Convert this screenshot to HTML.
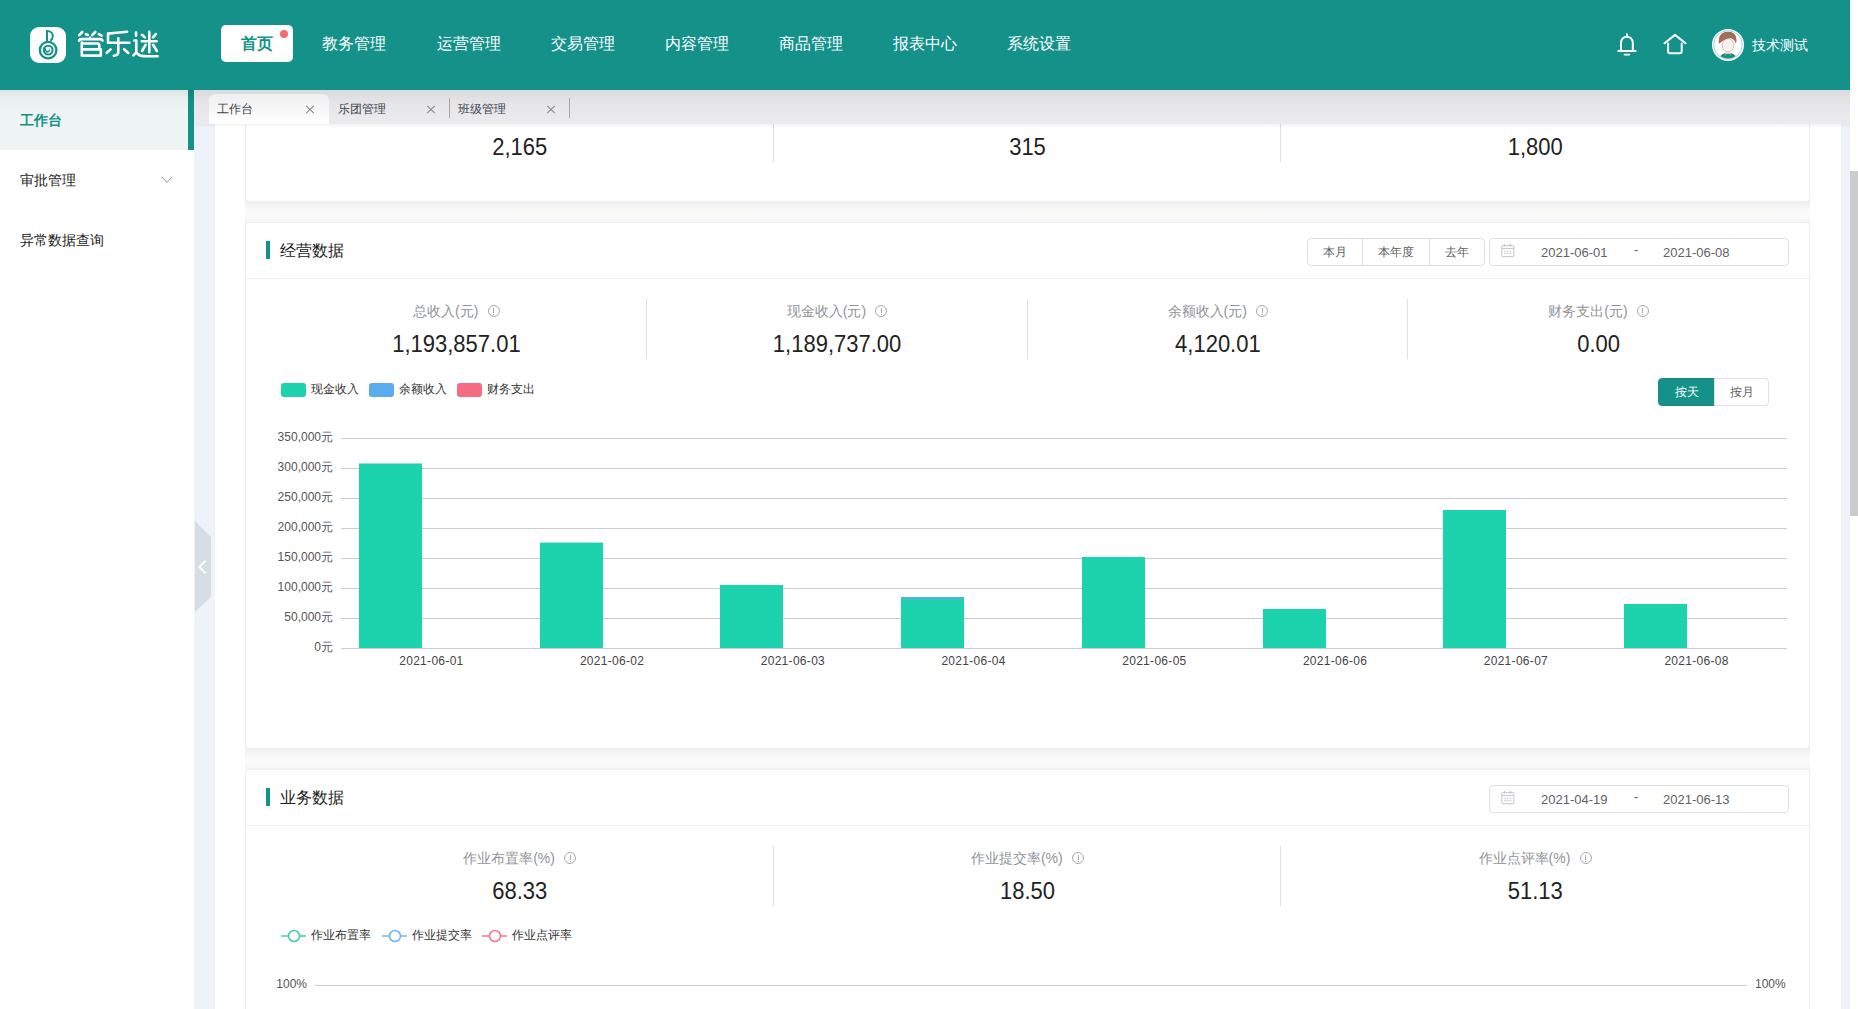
<!DOCTYPE html>
<html><head><meta charset="utf-8">
<style>
*{box-sizing:border-box;margin:0;padding:0}
html,body{width:1858px;height:1009px;overflow:hidden;background:#fff;font-family:"Liberation Sans",sans-serif;color:#303133}
.abs{position:absolute}
#hdr{position:absolute;left:0;top:0;width:1850px;height:90px;background:#14928a;z-index:5}
.nav{position:absolute;top:34px;font-size:16px;color:#fff;line-height:20px;white-space:nowrap}
#side{position:absolute;left:0;top:90px;width:194px;height:919px;background:#fff}
.sitem{position:absolute;left:20px;font-size:14px;line-height:20px;color:#1c1c1c;white-space:nowrap}
#tabs{position:absolute;z-index:4;left:194px;top:90px;width:1656px;height:34px;background:linear-gradient(#d9d9dd 0px,#e2e2e5 8px,#e8e8eb 18px,#ebebee 34px)}
.tab{position:absolute;font-size:12px;line-height:16px;color:#3d424d;white-space:nowrap}
.card{position:absolute;left:245px;width:1565px;background:#fff;border:1px solid #ebeef5;border-radius:4px}
.shd{position:absolute;left:245px;width:1565px;background:linear-gradient(#efeff0 6px,#f5f5f6 10px,#fbfbfb 16px,#f9f9fa 22px,#f4f4f6 26px)}
.big{position:absolute;font-size:22px;line-height:26px;color:#222;white-space:nowrap;text-align:center;transform:scaleY(1.06);transform-origin:50% 21px}
.lbl{position:absolute;font-size:14px;line-height:18px;color:#909399;white-space:nowrap}
.vdiv{position:absolute;width:1px;background:#dcdfe6}
.ttl{position:absolute;font-size:16px;line-height:20px;color:#222;white-space:nowrap}
.tbar{position:absolute;width:4px;height:18px;background:#14928a}
.hline{position:absolute;height:1px;background:#ebeef5}
.btn{position:absolute;height:28px;border:1px solid #dcdfe6;font-size:12px;line-height:26px;text-align:center;color:#606266;background:#fff}
.dt{position:absolute;font-size:13px;line-height:14px;color:#606266;white-space:nowrap}
.info{display:inline-block;width:12px;height:12px;border:1px solid #a8abb2;border-radius:50%;margin-left:9.4px;vertical-align:-0.5px;position:relative}
.info:after{content:"";position:absolute;left:4.5px;top:2px;width:1px;height:5px;background:#a8abb2}
.info:before{content:"";position:absolute;left:4.5px;top:8px;width:1px;height:1px;background:#a8abb2}
svg text{font-family:"Liberation Sans",sans-serif}
</style></head><body>
<div id="hdr">
<div class="abs" style="left:30px;top:27px;width:36px;height:36px;background:#fff;border-radius:9px"></div>
<svg class="abs" style="left:0;top:0" width="90" height="90">
<circle cx="48.1" cy="50.1" r="8.3" fill="none" stroke="#14928a" stroke-width="2.3"/>
<circle cx="48.2" cy="50.1" r="4.4" fill="none" stroke="#14928a" stroke-width="2.1"/>
<path d="M46.3 47.6 A2.6 2.6 0 1 0 49.4 48.2 A1.9 1.9 0 1 1 46.3 47.6 Z" fill="#14928a"/>
<path d="M47 41.8 V31 C50.6 31 52.8 33.4 52.8 36.1 C52.8 38.1 51.9 39.7 50.4 40.9" fill="none" stroke="#14928a" stroke-width="2"/>
</svg>
<svg class="abs" style="left:0;top:0" width="180" height="90"><g fill="none" stroke="#fff" stroke-width="2.6" stroke-linecap="round" stroke-linejoin="round">
<path d="M79.2 35.2 L82.3 32 M86 34.2 L87.8 35 M92.2 35.2 L95.3 32 M98.8 34.2 L101.6 35.6"/>
<path d="M79 40.6 Q79.6 39.1 81.2 39.1 H100.3 Q101.9 39.1 102.5 40.6 M90 37.8 V38.6"/>
<path d="M81.8 42.6 V55.6 H100.8 V49.4 H81.8 M81.8 43.5 H97.3 Q99.3 43.5 99.3 45.5 V47.4 Q99.3 49.4 97.3 49.4"/>
<path d="M108 42.4 V33.6 Q116 32.9 127.2 31.7 M108 42.8 H129.4 M118.3 38.2 V51.8 Q118.3 55.6 113.9 55.8 M106.8 52.8 L110.6 49.4 M124.1 49.2 L128.3 52.9"/>
<path d="M136 32.6 V35.6 M134.4 40.5 H136.3 V52 M133.3 55.4 L136.2 52.6 Q138.5 55.2 141.5 55.9 Q144 56.3 147 56.3 H157.6"/>
<path d="M149.3 31.8 V52.2 M141.8 41.3 H156.6 M142 34.8 L144.9 37.4 M155.8 34.1 L153 37.3 M145.6 44.8 L142 51 M153.1 44.8 L156.9 51"/>
</g></svg>
<div class="abs" style="left:221px;top:25px;width:72px;height:37px;background:#fff;border-radius:5px"></div>
<div class="abs" style="left:280px;top:30px;width:8px;height:8px;background:#f56c6c;border-radius:50%"></div>
<div class="nav" style="left:241px;color:#14928a;font-weight:bold">首页</div>
<div class="nav" style="left:322px">教务管理</div>
<div class="nav" style="left:437px">运营管理</div>
<div class="nav" style="left:551px">交易管理</div>
<div class="nav" style="left:665px">内容管理</div>
<div class="nav" style="left:779px">商品管理</div>
<div class="nav" style="left:893px">报表中心</div>
<div class="nav" style="left:1007px">系统设置</div>
<svg class="abs" style="left:1600px;top:0" width="250" height="90">
<path d="M17.5 51 H36.4" stroke="#fff" stroke-width="2" fill="none"/><path d="M26.9 35.6 V34.2" stroke="#fff" stroke-width="1.8" fill="none" stroke-linecap="round"/>
<path d="M21 50.5 V42.6 A5.9 5.9 0 0 1 32.8 42.6 V50.5" stroke="#fff" stroke-width="2" fill="none"/>
<path d="M24.5 54.6 H29.3" stroke="#fff" stroke-width="1.8" fill="none" stroke-linecap="round"/>
<path d="M64.5 43.3 L75 34.9 L85.5 43.3" stroke="#fff" stroke-width="2" fill="none" stroke-linecap="round" stroke-linejoin="round"/>
<path d="M68.1 43.5 V51.5 Q68.1 53.2 69.8 53.2 H80 Q81.7 53.2 81.7 51.5 V43.5" stroke="#fff" stroke-width="2" fill="none" stroke-linecap="round"/>
<circle cx="128" cy="44.9" r="16" fill="#fff"/>
<circle cx="128" cy="44.9" r="14.3" fill="none" stroke="#8cc9c4" stroke-width="0.8"/>
<clipPath id="avc"><circle cx="128" cy="44.9" r="13.5"/></clipPath>
<g clip-path="url(#avc)">
<path d="M118.5 60 Q119.5 55 124.5 53.2 L131.5 53.2 Q136.5 55 137.5 60 L137.5 62 L118.5 62 Z" fill="#14928a"/>
<rect x="125.6" y="49.5" width="4.8" height="4.2" fill="#fbeae8"/>
<ellipse cx="128" cy="45.3" rx="5.9" ry="6.6" fill="#fdf1f0" stroke="#a88a84" stroke-width="0.5"/>
<path d="M119 43.8 Q117.8 36 122.5 33 Q127 30.8 131.5 32 Q136.8 34 136.5 41 L135.8 43.5 Q134.5 39.2 131 38.3 Q128 37.8 125.5 39.3 Q121.5 41.5 119 43.8 Z" fill="#a06e5a"/>
<path d="M124.6 53.3 L126.6 53.3 L125.9 56.2 Z M131.4 53.3 L129.4 53.3 L130.1 56.2 Z" fill="#d9a21a"/>
</g>
</svg>
<div class="abs" style="left:1752px;top:36px;font-size:14px;line-height:18px;color:#fff;white-space:nowrap">技术测试</div>
</div>
<div class="abs" style="left:1850px;top:171px;width:8px;height:345px;background:#cbcbcb"></div>
<div id="side">
<div class="abs" style="left:0;top:0;width:194px;height:60px;background:linear-gradient(#dde2e2 0px,#e6ebeb 6px,#ebf0f0 12px,#eef3f3 20px,#eef3f3)"></div>
<div class="abs" style="left:188px;top:0;width:6px;height:60px;background:linear-gradient(#0f8279,#13908a 14px,#14928a)"></div>
<div class="sitem" style="top:20px;color:#14928a;font-weight:bold">工作台</div>
<div class="sitem" style="top:80px">审批管理</div>
<div class="sitem" style="top:140px">异常数据查询</div>
<svg class="abs" style="left:0;top:0" width="194" height="200"><path d="M161.8 87 L167 92.3 L172.2 87" stroke="#909399" stroke-width="1" fill="none"/></svg>
</div>
<div class="abs" style="left:194px;top:124px;width:21px;height:885px;background:#eef2f9"></div>
<div class="abs" style="left:1841px;top:124px;width:9px;height:885px;background:#eef2f9"></div>
<svg class="abs" style="left:190px;top:500px;z-index:3" width="30" height="130"><path d="M5 21 L21 37 V97 L5 112 Z" fill="#d5dde5"/><path d="M15.6 60.8 L9.2 67 L15.6 73.2" stroke="#fff" stroke-width="1.9" fill="none"/></svg>
<div class="abs" style="left:194px;top:124px;width:1656px;height:4px;z-index:4;background:linear-gradient(rgba(0,0,0,0.05),rgba(0,0,0,0))"></div>
<div id="tabs">
<div class="abs" style="left:15px;top:4px;width:120px;height:30px;border-radius:6px 6px 0 0;background:linear-gradient(#efeff1,#fff)"></div>
<div class="tab" style="left:23px;top:11px">工作台</div>
<div class="tab" style="left:144px;top:11px">乐团管理</div>
<div class="tab" style="left:264px;top:11px">班级管理</div>
<svg class="abs" style="left:0;top:0" width="400" height="34">
<path d="M112.2 15.8 L119.8 23.2 M119.8 15.8 L112.2 23.2" stroke="#8a8a8a" stroke-width="1.1"/>
<path d="M233.2 15.8 L240.8 23.2 M240.8 15.8 L233.2 23.2" stroke="#8a8a8a" stroke-width="1.1"/>
<path d="M353.2 15.8 L360.8 23.2 M360.8 15.8 L353.2 23.2" stroke="#8a8a8a" stroke-width="1.1"/>
<rect x="255" y="8" width="1" height="20" fill="#a9a9ad"/><rect x="375" y="8" width="1" height="20" fill="#a9a9ad"/>
</svg>
</div>
<div class="shd" style="top:196px;height:32px"></div>
<div class="shd" style="top:743px;height:32px"></div>
<div class="card" style="top:40px;height:162px"></div>
<div class="big" style="left:419.79999999999995px;width:200px;top:135px">2,165</div>
<div class="big" style="left:927.5px;width:200px;top:135px">315</div>
<div class="big" style="left:1435.2px;width:200px;top:135px">1,800</div>
<div class="vdiv" style="left:773px;top:100px;height:62px"></div>
<div class="vdiv" style="left:1280px;top:100px;height:62px"></div>
<div class="card" style="top:222px;height:527px"></div>
<div class="tbar" style="left:266px;top:241px"></div>
<div class="ttl" style="left:280px;top:241px">经营数据</div>
<div class="hline" style="left:246px;top:278px;width:1563px"></div>
<div class="btn" style="left:1307px;top:238px;width:56px;border-radius:4px 0 0 4px">本月</div>
<div class="btn" style="left:1362px;top:238px;width:68px">本年度</div>
<div class="btn" style="left:1429px;top:238px;width:56px;border-radius:0 4px 4px 0">去年</div>
<div class="btn" style="left:1489px;top:238px;width:300px;border-radius:4px"></div>
<svg class="abs" style="left:1495px;top:238px" width="25" height="28"><g fill="none" stroke="#c0c4cc" stroke-width="1"><rect x="6.8" y="7.6" width="12" height="11.1" rx="1"/><path d="M6.8 10.4 H18.8 M9.5 6 V8.5 M15.5 6 V8.5"/></g><g fill="#c0c4cc"><rect x="9.3" y="12.6" width="1.6" height="1"/><rect x="11.9" y="12.6" width="1.6" height="1"/><rect x="14.5" y="12.6" width="1.6" height="1"/><rect x="9.3" y="14.9" width="1.6" height="1"/><rect x="11.9" y="14.9" width="1.6" height="1"/><rect x="14.5" y="14.9" width="1.6" height="1"/></g></svg>
<div class="dt" style="left:1541px;top:246px">2021-06-01</div>
<div class="dt" style="left:1634px;top:243px">-</div>
<div class="dt" style="left:1663px;top:246px">2021-06-08</div>
<div class="big" style="left:306.4px;width:300px;top:332px">1,193,857.01</div>
<div class="lbl" style="left:306.4px;width:300px;top:302px;text-align:center">总收入(元)<span class="info"></span></div>
<div class="big" style="left:687.1px;width:300px;top:332px">1,189,737.00</div>
<div class="lbl" style="left:687.1px;width:300px;top:302px;text-align:center">现金收入(元)<span class="info"></span></div>
<div class="big" style="left:1067.9px;width:300px;top:332px">4,120.01</div>
<div class="lbl" style="left:1067.9px;width:300px;top:302px;text-align:center">余额收入(元)<span class="info"></span></div>
<div class="big" style="left:1448.6px;width:300px;top:332px">0.00</div>
<div class="lbl" style="left:1448.6px;width:300px;top:302px;text-align:center">财务支出(元)<span class="info"></span></div>
<div class="vdiv" style="left:646px;top:299px;height:60px"></div>
<div class="vdiv" style="left:1027px;top:299px;height:60px"></div>
<div class="vdiv" style="left:1407px;top:299px;height:60px"></div>
<div class="btn" style="left:1658px;top:378px;width:57px;height:28px;border-radius:4px 0 0 4px;background:#14928a;border-color:#14928a;color:#fff">按天</div>
<div class="btn" style="left:1714px;top:378px;width:55px;height:28px;border-radius:0 4px 4px 0">按月</div>
<div class="card" style="top:769px;height:400px"></div>
<div class="tbar" style="left:266px;top:788px"></div>
<div class="ttl" style="left:280px;top:788px">业务数据</div>
<div class="hline" style="left:246px;top:825px;width:1563px"></div>
<div class="btn" style="left:1489px;top:785px;width:300px;border-radius:4px"></div>
<svg class="abs" style="left:1495px;top:785px" width="25" height="28"><g fill="none" stroke="#c0c4cc" stroke-width="1"><rect x="6.8" y="7.6" width="12" height="11.1" rx="1"/><path d="M6.8 10.4 H18.8 M9.5 6 V8.5 M15.5 6 V8.5"/></g><g fill="#c0c4cc"><rect x="9.3" y="12.6" width="1.6" height="1"/><rect x="11.9" y="12.6" width="1.6" height="1"/><rect x="14.5" y="12.6" width="1.6" height="1"/><rect x="9.3" y="14.9" width="1.6" height="1"/><rect x="11.9" y="14.9" width="1.6" height="1"/><rect x="14.5" y="14.9" width="1.6" height="1"/></g></svg>
<div class="dt" style="left:1541px;top:793px">2021-04-19</div>
<div class="dt" style="left:1634px;top:790px">-</div>
<div class="dt" style="left:1663px;top:793px">2021-06-13</div>
<div class="big" style="left:369.79999999999995px;width:300px;top:879px">68.33</div>
<div class="lbl" style="left:369.79999999999995px;width:300px;top:849px;text-align:center">作业布置率(%)<span class="info"></span></div>
<div class="big" style="left:877.5px;width:300px;top:879px">18.50</div>
<div class="lbl" style="left:877.5px;width:300px;top:849px;text-align:center">作业提交率(%)<span class="info"></span></div>
<div class="big" style="left:1385.2px;width:300px;top:879px">51.13</div>
<div class="lbl" style="left:1385.2px;width:300px;top:849px;text-align:center">作业点评率(%)<span class="info"></span></div>
<div class="vdiv" style="left:773px;top:846px;height:60px"></div>
<div class="vdiv" style="left:1280px;top:846px;height:60px"></div>
<svg class="abs" style="left:0;top:0" width="1858" height="1009">
<rect x="281" y="383" width="25" height="14" rx="3" fill="#1dd3ad"/>
<text x="311" y="393" font-size="12" fill="#333">现金收入</text>
<rect x="369" y="383" width="25" height="14" rx="3" fill="#5aacee"/>
<text x="399" y="393" font-size="12" fill="#333">余额收入</text>
<rect x="457" y="383" width="25" height="14" rx="3" fill="#f56c84"/>
<text x="487" y="393" font-size="12" fill="#333">财务支出</text>
<rect x="341" y="438" width="1446" height="1" fill="#cccccc"/>
<text x="333" y="441" font-size="12" fill="#555" text-anchor="end">350,000元</text>
<rect x="341" y="468" width="1446" height="1" fill="#cccccc"/>
<text x="333" y="471" font-size="12" fill="#555" text-anchor="end">300,000元</text>
<rect x="341" y="498" width="1446" height="1" fill="#cccccc"/>
<text x="333" y="501" font-size="12" fill="#555" text-anchor="end">250,000元</text>
<rect x="341" y="528" width="1446" height="1" fill="#cccccc"/>
<text x="333" y="531" font-size="12" fill="#555" text-anchor="end">200,000元</text>
<rect x="341" y="558" width="1446" height="1" fill="#cccccc"/>
<text x="333" y="561" font-size="12" fill="#555" text-anchor="end">150,000元</text>
<rect x="341" y="588" width="1446" height="1" fill="#cccccc"/>
<text x="333" y="591" font-size="12" fill="#555" text-anchor="end">100,000元</text>
<rect x="341" y="618" width="1446" height="1" fill="#cccccc"/>
<text x="333" y="621" font-size="12" fill="#555" text-anchor="end">50,000元</text>
<rect x="341" y="648" width="1446" height="1" fill="#cccccc"/>
<text x="333" y="651" font-size="12" fill="#555" text-anchor="end">0元</text>
<rect x="359" y="463" width="63" height="185" fill="#1dd3ad"/>
<text x="431.4" y="665" font-size="12" fill="#444" letter-spacing="0.3" text-anchor="middle">2021-06-01</text>
<rect x="540" y="543" width="63" height="105" fill="#1dd3ad"/>
<text x="612.1" y="665" font-size="12" fill="#444" letter-spacing="0.3" text-anchor="middle">2021-06-02</text>
<rect x="720" y="585" width="63" height="63" fill="#1dd3ad"/>
<text x="792.9" y="665" font-size="12" fill="#444" letter-spacing="0.3" text-anchor="middle">2021-06-03</text>
<rect x="901" y="597" width="63" height="51" fill="#1dd3ad"/>
<text x="973.6" y="665" font-size="12" fill="#444" letter-spacing="0.3" text-anchor="middle">2021-06-04</text>
<rect x="1082" y="557" width="63" height="91" fill="#1dd3ad"/>
<text x="1154.4" y="665" font-size="12" fill="#444" letter-spacing="0.3" text-anchor="middle">2021-06-05</text>
<rect x="1263" y="609" width="63" height="39" fill="#1dd3ad"/>
<text x="1335.1" y="665" font-size="12" fill="#444" letter-spacing="0.3" text-anchor="middle">2021-06-06</text>
<rect x="1443" y="510" width="63" height="138" fill="#1dd3ad"/>
<text x="1515.9" y="665" font-size="12" fill="#444" letter-spacing="0.3" text-anchor="middle">2021-06-07</text>
<rect x="1624" y="604" width="63" height="44" fill="#1dd3ad"/>
<text x="1696.6" y="665" font-size="12" fill="#444" letter-spacing="0.3" text-anchor="middle">2021-06-08</text>
<rect x="901" y="597" width="63" height="2" fill="#5aacee"/>
<rect x="359" y="463" width="63" height="1" fill="#9adbe0"/>
<rect x="540" y="542" width="63" height="1" fill="#b0e2ec"/>
<rect x="281" y="935.25" width="25" height="1.5" fill="#45cdab"/>
<circle cx="294" cy="936" r="5.5" fill="#fff" stroke="#45cdab" stroke-width="1.6"/>
<text x="311" y="939" font-size="12" fill="#333">作业布置率</text>
<rect x="382" y="935.25" width="25" height="1.5" fill="#72b5ef"/>
<circle cx="395" cy="936" r="5.5" fill="#fff" stroke="#72b5ef" stroke-width="1.6"/>
<text x="412" y="939" font-size="12" fill="#333">作业提交率</text>
<rect x="482" y="935.25" width="25" height="1.5" fill="#f27a90"/>
<circle cx="495" cy="936" r="5.5" fill="#fff" stroke="#f27a90" stroke-width="1.6"/>
<text x="512" y="939" font-size="12" fill="#333">作业点评率</text>
<rect x="315" y="985" width="1432" height="1" fill="#cccccc"/>
<text x="307" y="988" font-size="12" fill="#555" text-anchor="end">100%</text>
<text x="1755" y="988" font-size="12" fill="#555">100%</text>
</svg>
</body></html>
